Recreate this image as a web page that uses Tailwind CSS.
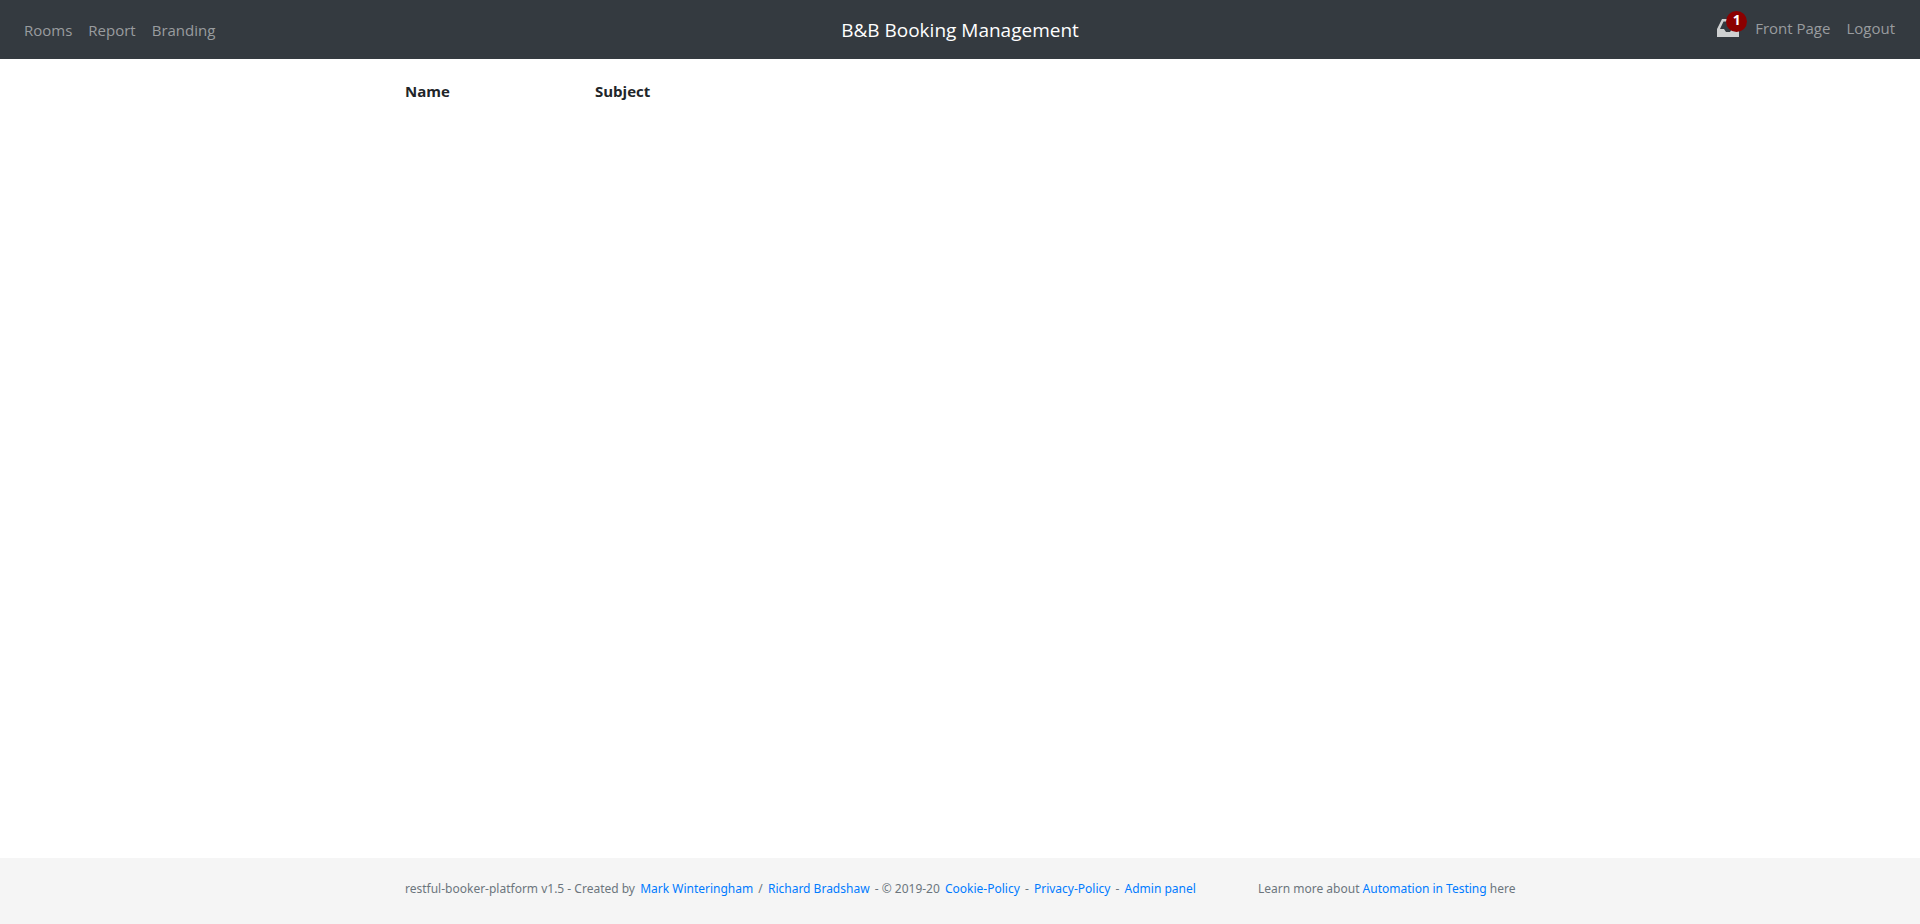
<!DOCTYPE html>
<html lang="en">
<head>
<meta charset="utf-8">
<meta name="viewport" content="width=device-width, initial-scale=1">
<title>B&amp;B Booking Management</title>
<script src="https://cdn.jsdelivr.net/npm/@tailwindcss/browser@4"></script>
</head>
<body class="flex min-h-screen flex-col bg-white font-['Segoe_UI','Open_Sans',sans-serif] text-[15px] leading-6 text-[#212529]">
  <nav class="grid grid-cols-[1fr_auto_1fr] items-center bg-[#343a40] px-6 pt-2 pb-2 text-[#999c9f]">
    <ul class="flex gap-4">
      <li><a href="#rooms" class="block py-2">Rooms</a></li>
      <li><a href="#report" class="block py-2">Report</a></li>
      <li><a href="#branding" class="block py-2">Branding</a></li>
    </ul>
    <a href="#home" class="text-[19px] leading-8 text-white">B&amp;B Booking Management</a>
    <ul class="flex justify-end gap-4 pr-px pb-[3px]">
      <li>
        <a href="#messages" aria-label="Messages, 1 unread" class="relative block pt-[9px] pr-2">
          <svg class="h-[22px] w-[22px]" viewBox="0 0 22 22" fill="#ced0d1" fill-rule="evenodd" aria-hidden="true"><path d="M5 2h12l5 10v8H0v-8zM6.5 4.5 3 12h4l2 3h4l2-3h4l-3.500-7.500z"/></svg>
          <span class="absolute top-[3px] right-0 flex h-[21px] w-[21px] items-center justify-center rounded-full bg-[#8b0000] pb-[3px] text-sm leading-4 font-bold text-white">1</span>
        </a>
      </li>
      <li><a href="#front" class="-ml-2 block py-2">Front Page</a></li>
      <li><a href="#logout" class="block py-2">Logout</a></li>
    </ul>
  </nav>
  <main class="mx-auto w-full max-w-[1140px] grow px-[15px] pt-5">
    <div class="-mx-[15px] grid grid-cols-12 font-bold">
      <div class="col-span-2 px-[15px]">Name</div>
      <div class="col-span-10 px-[15px]">Subject</div>
    </div>
  </main>
  <footer class="bg-[#f5f5f5] pt-[19px] pb-[23px]">
    <div class="mx-auto grid w-full max-w-[1140px] grid-cols-[3fr_1fr] font-['Segoe_UI','Noto_Sans',sans-serif] text-xs leading-6 text-[#6c757d]">
      <p class="px-[15px]">restful-booker-platform v1.5 - Created by <a href="#mark" class="mx-0.5 text-[#007bff]">Mark Winteringham</a> / <a href="#richard" class="mx-0.5 text-[#007bff]">Richard Bradshaw</a> - © 2019-20 <a href="#cookie" class="mx-0.5 text-[#007bff]">Cookie-Policy</a> - <a href="#privacy" class="mx-0.5 text-[#007bff]">Privacy-Policy</a> - <a href="#admin" class="mx-0.5 text-[#007bff]">Admin panel</a></p>
      <p class="px-[13px] whitespace-nowrap">Learn more about <a href="#testing" class="text-[#007bff]">Automation in Testing</a> here</p>
    </div>
  </footer>
</body>
</html>
